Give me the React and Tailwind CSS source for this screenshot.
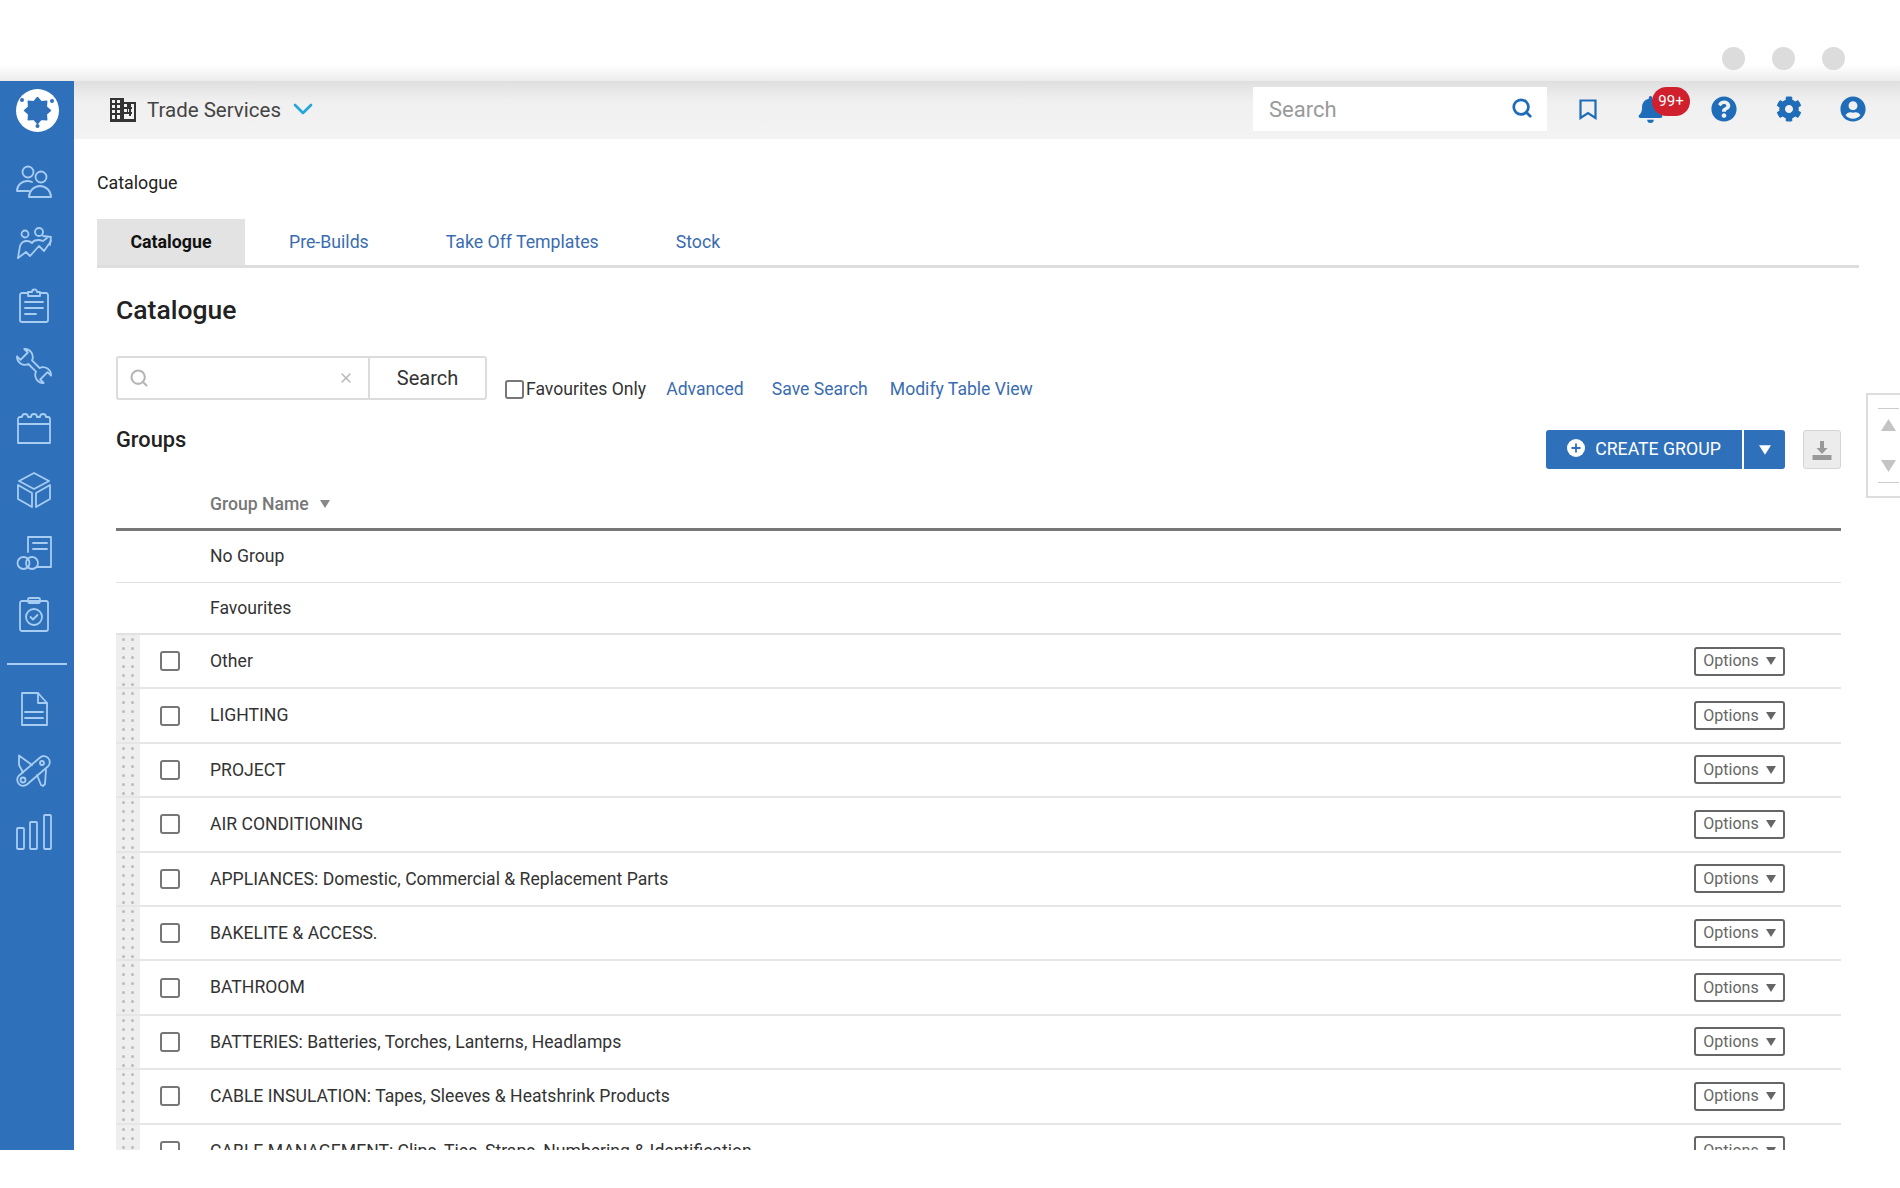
import React from 'react';
import { Search, X, ChevronDown } from 'lucide-react';
import { FaBell, FaCog, FaQuestionCircle, FaUserCircle } from 'react-icons/fa';

const iconProps = {
  viewBox: '0 0 36 36',
  fill: 'none',
  stroke: 'currentColor',
  strokeWidth: 1.8,
  strokeLinecap: 'round',
  strokeLinejoin: 'round',
  className: 'w-9 h-9',
};

// sidebar icons are hand drawn, nothing in the icon packs lines up with them
const UsersIcon = () => (
  <svg {...iconProps}>
    <circle cx="12" cy="9" r="5.500" />
    <circle cx="25" cy="14" r="5.500" />
    <path d="M13 28H1c0-6 5-10 10-10 2 0 3 0 5 1" />
    <path d="M13 34c0-6 5-11 11-11s11 5 11 11z" />
  </svg>
);

const TeamGrowthIcon = () => (
  <svg {...iconProps}>
    <circle cx="9" cy="9" r="3.500" />
    <circle cx="23" cy="7" r="4" />
    <path d="M2 33l2-12c1-3 4-5 7-5 3 0 4 1 5 2 1-2 4-3 7-3 2 0 3 1 4 1l4-3" />
    <path d="M2 33l8-6 4 4 9-10 5 5 7-10" />
    <path d="M27 11l8 1-1 8" />
  </svg>
);

const ClipboardIcon = () => (
  <svg {...iconProps}>
    <path d="M12 6H6a2 2 0 0 0-2 2v25a2 2 0 0 0 2 2h24a2 2 0 0 0 2-2V8a2 2 0 0 0-2-2h-6" />
    <path d="M12 9V5h4a2.500 2.500 0 0 1 5 0h3v4z" />
    <path d="M9 15h18M9 21h18M9 27h11" />
  </svg>
);

const WrenchIcon = () => (
  <svg {...iconProps}>
    <path d="M8.300 1L11.800 4.500L4.500 11.800L1 8.300A8 8 0 0 0 12.400 16L20 23.600A8 8 0 0 0 27.700 35L24.200 31.500L31.500 24.200L35 27.700A8 8 0 0 0 23.600 20L16 12.400A8 8 0 0 0 8.300 1Z" />
  </svg>
);

const CalendarIcon = () => (
  <svg {...iconProps}>
    <path d="M2 9a2 2 0 0 1 2-2h2c0-4 6-4 6 0h3c0-4 6-4 6 0h3c0-4 6-4 6 0h2a2 2 0 0 1 2 2v24H2z" />
    <path d="M2 14h32" />
  </svg>
);

const BoxIcon = () => (
  <svg {...iconProps}>
    <path d="M18 1l15 8-15 8-15-8z" />
    <path d="M2 13l14 8v14L2 27z" />
    <path d="M34 13l-14 8v14l14-8z" />
  </svg>
);

const DocCoinsIcon = () => (
  <svg {...iconProps}>
    <path d="M12 18V3h23v30H21" />
    <path d="M17 9h14M17 15h14" />
    <circle cx="7.500" cy="29" r="6" />
    <circle cx="16" cy="29" r="6" />
  </svg>
);

const ClipboardCheckIcon = () => (
  <svg {...iconProps}>
    <rect x="4" y="5" width="28" height="30" rx="2" />
    <rect x="12" y="2" width="12" height="5" rx="1.500" />
    <circle cx="18" cy="21" r="8" />
    <path d="M14.500 21l2.500 2.500 4.500-4.500" />
  </svg>
);

const FileIcon = () => (
  <svg {...iconProps}>
    <path d="M6 3h16l9 10v22H6z" />
    <path d="M22 3v10h9" />
    <path d="M9 22h18M9 28h18" />
  </svg>
);

const KnifeIcon = () => (
  <svg {...iconProps}>
    <path d="M3.100 23.450L24.100 5.450A6 6 0 0 1 31.900 14.550L10.900 32.550A6 6 0 0 1 3.100 23.450Z" />
    <circle cx="7" cy="28" r="2.500" />
    <circle cx="26" cy="11" r="2" />
    <path d="M7 20.500L3 13V3.500L16 13" />
    <path d="M21 23l4 10 2 1 2-2 1-14" />
  </svg>
);

const BarsIcon = () => (
  <svg {...iconProps}>
    <rect x="1" y="14" width="7" height="21" rx="1" />
    <rect x="14" y="8" width="7" height="27" rx="1" />
    <rect x="28" y="1" width="7" height="34" rx="1" />
  </svg>
);

const LogoMark = () => (
  <div className="w-[43px] h-[43px] rounded-full bg-white">
    <svg viewBox="0 0 43 43" className="w-[43px] h-[43px]">
      <polygon
        points="21.500,8.500 25.100,12.700 30.700,12.300 30.300,17.900 34.500,21.500 30.300,25.100 30.700,30.700 25.100,30.300 21.500,34.500 17.900,30.300 12.300,30.700 12.700,25.100 8.500,21.500 12.700,17.900 12.300,12.300 17.900,12.700"
        fill="#2f70bb"
        stroke="#2f70bb"
        strokeWidth="1.500"
        strokeLinejoin="round"
      />
      <circle cx="6" cy="11" r="2" fill="#2f70bb" />
      <circle cx="36" cy="12" r="2" fill="#2f70bb" />
      <circle cx="21.500" cy="37" r="2" fill="#2f70bb" />
    </svg>
  </div>
);

const BuildingIcon = () => (
  <svg viewBox="0 0 26 24" className="w-[26px] h-6 fill-[#333]">
    <path d="M0 0h14v4h12v20H0zM2 2v3h3V2zm5 0v3h3V2zM2 7v3h3V7zm5 0v3h3V7zM2 12v3h3v-3zm5 0v3h3v-3zM2 17v4h3v-4zm5 0v4h3v-4zm7-11v3h3V6zm0 5v3h3v-3zm0 5v5h10V6h-3v3h1v2h-1v3h1v2h-1v2h-2v-2h-1v-2h1v-3h-1v5z" fillRule="evenodd" />
  </svg>
);

const BookmarkIcon = () => (
  <svg viewBox="0 0 18 21" className="w-[18px] h-[21px]" fill="none" stroke="#1f6cb8" strokeWidth="2.200">
    <path d="M1.500 1.500h15v17.500l-7.500-5-7.500 5z" />
  </svg>
);

const DownloadTrayIcon = () => (
  <svg viewBox="0 0 20 20" className="w-5 h-5 fill-[#999]">
    <path d="M8 1h4v7h3.500L10 14 4.500 8H8z" />
    <rect x="0.500" y="15" width="19" height="5" />
  </svg>
);

const sideTop = [UsersIcon, TeamGrowthIcon, ClipboardIcon, WrenchIcon, CalendarIcon, BoxIcon, DocCoinsIcon, ClipboardCheckIcon];
const sideBottom = [FileIcon, KnifeIcon, BarsIcon];

const groups = [
  'Other',
  'LIGHTING',
  'PROJECT',
  'AIR CONDITIONING',
  'APPLIANCES: Domestic, Commercial & Replacement Parts',
  'BAKELITE & ACCESS.',
  'BATHROOM',
  'BATTERIES: Batteries, Torches, Lanterns, Headlamps',
  'CABLE INSULATION: Tapes, Sleeves & Heatshrink Products',
  'CABLE MANAGEMENT: Clips, Ties, Straps, Numbering & Identification',
];

const DragHandle = () => (
  <div className="grid grid-cols-2 content-start gap-x-[6px] gap-y-[6px] w-6 h-full pt-[3px] px-[6px] bg-[#eeeeee]">
    {Array.from({ length: 12 }).map((_, i) => (
      <span key={i} className="w-[3px] h-[3px] rounded-full bg-[#bbbbbb]" />
    ))}
  </div>
);

const Triangle = ({ className }) => (
  <svg viewBox="0 0 10 8" className={className}>
    <path d="M0 0h10L5 8z" fill="currentColor" />
  </svg>
);

export default function App() {
  return (
    <div className="h-[1188px] flex flex-col overflow-hidden bg-white text-[#333] font-['Roboto',sans-serif]">
      {/* window chrome */}
      <div className="h-[81px] shrink-0 flex justify-end items-start gap-[27px] pt-[47px] pr-[55px] bg-gradient-to-b from-white from-[80%] to-[#ececec]">
        <span className="w-[23px] h-[23px] rounded-full bg-[#dcdcdc]" />
        <span className="w-[23px] h-[23px] rounded-full bg-[#dcdcdc]" />
        <span className="w-[23px] h-[23px] rounded-full bg-[#dcdcdc]" />
      </div>

      <div className="relative h-[1069px] shrink-0 flex overflow-hidden">
        {/* sidebar */}
        <aside className="w-[74px] shrink-0 flex flex-col bg-[#2f70bb] text-[#a8cdf2]">
          <div className="h-[58px] flex items-center justify-center pl-[1px]">
            <LogoMark />
          </div>
          <div className="flex flex-col gap-[25.800px] mt-[24px] pl-[16px]">
            {sideTop.map((Icon, i) => (
              <Icon key={i} />
            ))}
          </div>
          <div className="h-[2px] mx-[7px] mt-[31px] mb-[25px] bg-[#a8cdf2]" />
          <div className="flex flex-col gap-[26px] pl-[16px]">
            {sideBottom.map((Icon, i) => (
              <Icon key={i} />
            ))}
          </div>
        </aside>

        <div className="flex-1 min-w-0 flex flex-col">
          {/* top bar */}
          <header className="h-[58px] shrink-0 flex items-center pl-[36px] bg-gradient-to-b from-[#dfdfdf] via-[#f0f0f0] via-[35%] to-[#f3f3f3]">
            <BuildingIcon />
            <span className="ml-[11px] text-[20.500px] text-[#444]">Trade Services</span>
            <ChevronDown className="ml-[6px] w-8 h-8 text-[#22a7d8] -mt-[2px]" strokeWidth={2} />
            <div className="ml-auto -mt-[2px] w-[294px] h-[44px] flex items-center justify-between pl-4 pr-[14px] bg-white">
              <span className="text-[22px] text-[#9a9a9a]">Search</span>
              <Search className="w-[22px] h-[22px] text-[#1f6cb8] -mt-[3px]" strokeWidth={3} />
            </div>
            <div className="ml-[32px] -mt-[2px]"><BookmarkIcon /></div>
            <div className="relative ml-[40px] -mt-[2px] w-[26px] flex justify-center">
              <FaBell className="w-[25px] h-[27px] text-[#1f6cb8]" />
              <span className="absolute top-[-9px] left-[15px] w-[38px] h-[29px] flex items-center justify-center rounded-full bg-[#d0202e] text-white text-[15px]">
                99+
              </span>
            </div>
            <FaQuestionCircle className="ml-[48px] -mt-[2px] w-[26px] h-[26px] text-[#1f6cb8]" />
            <FaCog className="ml-[39px] -mt-[2px] w-[26px] h-[26px] text-[#1f6cb8]" />
            <FaUserCircle className="ml-[38px] -mt-[2px] mr-[34px] w-[26px] h-[26px] text-[#1f6cb8]" />
          </header>

          {/* page */}
          <main className="flex-1 min-h-0 overflow-hidden pl-[23px] pr-[41px]">
            <p className="mt-[34px] text-[17.800px] leading-[20px] text-[#222]">Catalogue</p>
            <nav className="flex items-stretch h-[49px] mt-[26px] border-b-[3px] border-[#dddddd] text-[17.700px] text-[#3a6cb0]">
              <span className="w-[148px] flex items-center justify-center bg-[#e3e3e3] font-bold text-[17.800px] text-[#111]">Catalogue</span>
              <span className="ml-[44px] flex items-center">Pre-Builds</span>
              <span className="ml-[77px] flex items-center">Take Off Templates</span>
              <span className="ml-[77px] flex items-center">Stock</span>
            </nav>

            <div className="pl-[19px] pr-[18px]">
              <h2 className="mt-[24px] text-[26.500px] leading-[36px] font-medium text-[#222]">Catalogue</h2>

              <div className="flex mt-[28px] h-[44px]">
                <div className="flex w-[371px] border-2 border-[#dcdcdc] rounded-[3px]">
                  <div className="w-[252px] flex items-center justify-between pl-[11px] pr-[14px] border-r-2 border-[#dcdcdc]">
                    <Search className="w-5 h-5 text-[#b5b5b5]" strokeWidth={2.500} />
                    <X className="w-4 h-4 text-[#b5b5b5]" strokeWidth={2} />
                  </div>
                  <span className="flex-1 flex items-center justify-center text-[20px] text-[#333]">Search</span>
                </div>
                <label className="flex items-center self-end h-[28px] -mb-[3px] ml-[18px] text-[17.600px] text-[#333]">
                  <span className="w-[19px] h-[19px] mr-[2px] border-2 border-[#777] rounded-[3px]" />
                  Favourites Only
                </label>
                <div className="flex items-center self-end h-[28px] -mb-[3px] ml-[20px] text-[17.600px] text-[#3a6cb0]">
                  <span>Advanced</span>
                  <span className="ml-[28px]">Save Search</span>
                  <span className="ml-[22px]">Modify Table View</span>
                </div>
              </div>

              <div className="flex items-start justify-between mt-[30px] h-[39px]">
                <h3 className="-mt-[4px] text-[21.800px] leading-[28px] font-medium text-[#222]">Groups</h3>
                <div className="flex">
                  <div className="flex h-[39px] w-[239px] rounded-[3px] overflow-hidden bg-[#2f70bb] text-white">
                    <span className="flex-1 flex items-center justify-center gap-[10px] text-[17.700px]">
                      <svg viewBox="0 0 20 20" className="w-[18px] h-[18px] -mt-[4px]">
                        <circle cx="10" cy="10" r="10" fill="#fff" />
                        <path d="M9 5h2v4h4v2h-4v4H9v-4H5V9h4z" fill="#2f70bb" />
                      </svg>
                      CREATE GROUP
                    </span>
                    <span className="w-[43px] flex items-center justify-center border-l-2 border-white">
                      <Triangle className="w-3 h-[10px]" />
                    </span>
                  </div>
                  <button className="w-[38px] h-[39px] ml-[18px] flex items-center justify-center rounded-[3px] border border-[#d5d5d5] bg-[#ececec]">
                    <DownloadTrayIcon />
                  </button>
                </div>
              </div>

              {/* groups table */}
              <div className="flex items-center h-[51px] mt-[11px] pl-[94px] border-b-[3px] border-[#777777] text-[17.600px] font-medium text-[#777]">
                Group Name
                <Triangle className="ml-[11px] w-[10px] h-2 text-[#888]" />
              </div>
              <div className="flex items-center h-[52px] pl-[94px] border-b border-[#e2e2e2] text-[17.600px]">No Group</div>
              <div className="flex items-center h-[52px] pl-[94px] border-b-2 border-[#e2e2e2] text-[17.600px]">Favourites</div>
              {groups.map((name) => (
                <div key={name} className="flex items-center h-[54.400px] border-b-2 border-[#e6e6e6] text-[17.600px]">
                  <DragHandle />
                  <span className="w-5 h-5 ml-5 shrink-0 border-2 border-[#777] rounded-[3px]" />
                  <span className="ml-[30px] flex-1">{name}</span>
                  <button className="w-[91px] h-[29px] mr-[56px] flex items-center justify-center gap-[7px] rounded-[3px] border-2 border-[#666] text-[16px] text-[#666]">
                    Options
                    <Triangle className="w-[10px] h-2" />
                  </button>
                </div>
              ))}
            </div>
          </main>
        </div>

        {/* floating scroll widget */}
        <div className="absolute right-0 top-[312px] w-[34px] h-[105px] flex flex-col items-center pt-[13px] pl-2 border-2 border-r-0 border-[#dddddd] bg-white text-[#c4c4c4]">
          <span className="w-[21px] h-px bg-[#cccccc]" />
          <Triangle className="mt-[10px] w-[15px] h-3 rotate-180" />
          <Triangle className="mt-[29px] w-[15px] h-3" />
          <span className="mt-[10px] w-[21px] h-px bg-[#cccccc]" />
        </div>
      </div>
    </div>
  );
}
